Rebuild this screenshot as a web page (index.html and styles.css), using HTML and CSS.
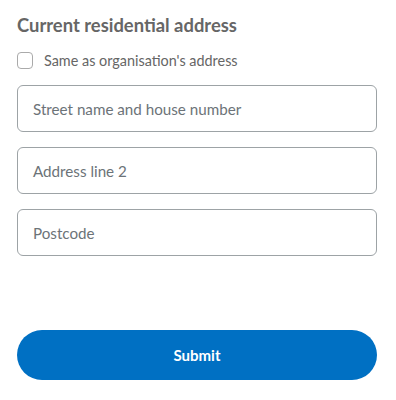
FILE: index.html
```html
<!DOCTYPE html>
<html lang="en">
<head>
<meta charset="utf-8">
<link rel="stylesheet" href="styles.css">
</head>
<body>
<form class="form">
  <h2 class="title">Current residential address</h2>
  <label class="check">
    <span class="box"></span>
    <span class="check-label">Same as organisation's address</span>
  </label>
  <div class="fields">
    <div class="field"><span class="ph">Street name and house number</span></div>
    <div class="field"><span class="ph">Address line 2</span></div>
    <div class="field"><span class="ph">Postcode</span></div>
  </div>
  <button type="button" class="submit">Submit</button>
</form>
</body>
</html>
```
FILE: styles.css
```css
html, body {
  margin: 0;
  padding: 0;
  background: #fff;
}
body {
  font-family: "Lato", "Open Sans", sans-serif;
  color: #6c7378;
}
.form {
  display: flex;
  flex-direction: column;
  padding: 13px 19px 0 17px;
}
.title {
  margin: 0;
  font-size: 18.4px;
  font-weight: 700;
  line-height: 24px;
  color: #666;
}
.check {
  display: flex;
  align-items: center;
  gap: 11px;
  margin-top: 15px;
  height: 17px;
}
.box {
  width: 16px;
  height: 17px;
  box-sizing: border-box;
  border: 1px solid #aaa;
  border-radius: 4px;
}
.check-label {
  font-size: 14.4px;
  color: #666;
}
.fields {
  display: flex;
  flex-direction: column;
  gap: 15px;
  margin-top: 16px;
}
.field {
  height: 47px;
  box-sizing: border-box;
  border: 1px solid #9da3a6;
  border-radius: 6px;
  display: flex;
  align-items: center;
  padding-left: 15px;
}
.ph {
  font-size: 15.2px;
  color: #6c7378;
}
.submit {
  margin-top: 74px;
  height: 50px;
  border: none;
  border-radius: 25px;
  background: #0070c3;
  color: #fff;
  font-family: "Lato", "Open Sans", sans-serif;
  font-weight: 700;
  font-size: 15px;
}
```
